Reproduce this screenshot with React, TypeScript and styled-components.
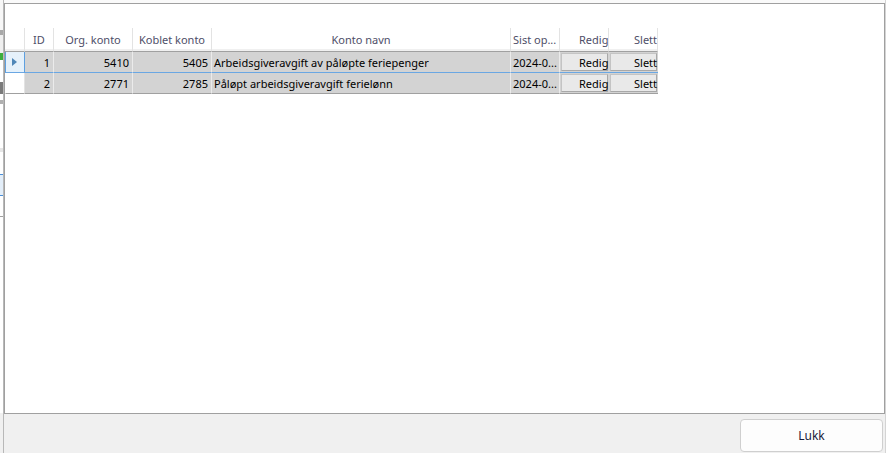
import React from "react";
import styled, { createGlobalStyle } from "styled-components";

const Global = createGlobalStyle`
  html, body { margin: 0; padding: 0; background: #f0f0f0; }
  body { font-family: "Noto Sans", "Open Sans", sans-serif; font-size: 11px; }
  * { box-sizing: border-box; }
`;

const Screen = styled.div`
  display: flex;
  width: 886px;
  height: 453px;
  overflow: hidden;
`;

const BackdropStrip = styled.div`
  width: 4px;
  display: flex;
  flex-direction: column;
  background: #fafafa;
  border-right: 1px solid #b8b8b8;
`;

const Stripe = styled.div<{ $h: number; $c: string }>`
  height: ${(p) => p.$h}px;
  flex-shrink: 0;
  background: ${(p) => p.$c};
`;

const Main = styled.div`
  width: 881px;
  display: flex;
  flex-direction: column;
  background: #f0f0f0;
`;

const TopGap = styled.div`
  height: 3px;
  background: #fafafa;
`;

const Panel = styled.div`
  height: 411px;
  background: #ffffff;
  border: 1px solid #a0a0a0;
  padding-top: 24px;
`;

const GridView = styled.div`
  width: 653px;
  overflow: hidden;
  display: grid;
  grid-template-columns: 20px 29px 79px 79px 299px 49px 49px 49px;
`;

const HeaderCell = styled.div<{ $align?: string; $pl?: number }>`
  height: 24px;
  line-height: 23px;
  padding: 0 2px 0 ${(p) => p.$pl ?? 2}px;
  background: linear-gradient(#ffffff 0, #ffffff 21px, #f0f0f0 21px);
  border-right: 1px solid #e3e3e3;
  border-bottom: 1px solid #a0a0a0;
  color: #4e4e68;
  text-align: ${(p) => p.$align ?? "center"};
  white-space: nowrap;
  overflow: hidden;
`;

const Cell = styled.div<{ $align?: string; $sep: string }>`
  height: 21px;
  line-height: 21px;
  padding: 0 3px 0 2px;
  background: #d3d3d3;
  color: #000;
  border-right: 1px solid #ebebeb;
  border-bottom: 1px solid ${(p) => p.$sep};
  text-align: ${(p) => p.$align ?? "left"};
  white-space: nowrap;
  overflow: hidden;
`;

const RowHeader = styled.div<{ $current?: boolean; $sep: string }>`
  height: 21px;
  display: flex;
  align-items: center;
  justify-content: center;
  background: ${(p) => (p.$current ? "#e5f1fb" : "#ffffff")};
  border-right: 1px solid ${(p) => (p.$current ? "#5ea0e0" : "#e3e3e3")};
  border-left: 1px solid ${(p) => (p.$current ? "#5ea0e0" : "transparent")};
  border-bottom: 1px solid ${(p) => p.$sep};
`;

const ButtonCell = styled.div<{ $sep: string }>`
  height: 21px;
  padding: 1px;
  background: #d3d3d3;
  border-bottom: 1px solid ${(p) => p.$sep};
  overflow: hidden;
`;

const GridButton = styled.div<{ $pl: number }>`
  height: 18px;
  line-height: 18px;
  padding-left: ${(p) => p.$pl}px;
  background: #e9e9e9;
  border: 1px solid #c4c4c4;
  border-right-color: #a8a8a8;
  border-bottom-color: #a8a8a8;
  color: #000;
  white-space: nowrap;
`;

const Footer = styled.div`
  flex: 1;
  display: flex;
  justify-content: flex-end;
  align-items: flex-start;
  padding: 5px 2px 0 0;
`;

const CloseButton = styled.button`
  width: 143px;
  height: 33px;
  background: #fdfdfd;
  border: 1px solid #cfcfcf;
  border-radius: 4px;
  font-family: "Noto Sans", "Open Sans", sans-serif;
  font-size: 12px;
  color: #1a1a3a;
  padding: 0;
`;

const RightStrip = styled.div`
  width: 1px;
  background: #d4d4d4;
`;

const Arrow = () => (
  <svg width="6" height="8" viewBox="0 0 6 8">
    <polygon points="0,0 5,4 0,8" fill="#4f87b8" />
  </svg>
);

const rows = [
  { id: 1, org: "5410", kob: "5405", name: "Arbeidsgiveravgift av påløpte feriepenger", date: "2024-0...", current: true },
  { id: 2, org: "2771", kob: "2785", name: "Påløpt arbeidsgiveravgift ferielønn", date: "2024-0...", current: false },
];

export default function App() {
  return (
    <>
      <Global />
      <Screen>
        <BackdropStrip>
          <Stripe $h={30} $c="#f7f7f7" />
          <Stripe $h={5} $c="#a8a8a8" />
          <Stripe $h={18} $c="#efefef" />
          <Stripe $h={7} $c="#3cae3c" />
          <Stripe $h={22} $c="#ffffff" />
          <Stripe $h={12} $c="#7a7a7a" />
          <Stripe $h={6} $c="#ffffff" />
          <Stripe $h={4} $c="#b0b0b0" />
          <Stripe $h={44} $c="#ffffff" />
          <Stripe $h={4} $c="#e6e6e6" />
          <Stripe $h={22} $c="#ffffff" />
          <Stripe $h={1} $c="#4a90d9" />
          <Stripe $h={20} $c="#e3eef9" />
          <Stripe $h={1} $c="#4a90d9" />
          <Stripe $h={20} $c="#ffffff" />
          <Stripe $h={1} $c="#a0a0a0" />
          <Stripe $h={196} $c="#ffffff" />
          <Stripe $h={40} $c="#f0f0f0" />
        </BackdropStrip>
        <Main>
          <TopGap />
          <Panel>
            <GridView>
              <HeaderCell />
              <HeaderCell>ID</HeaderCell>
              <HeaderCell>Org. konto</HeaderCell>
              <HeaderCell>Koblet konto</HeaderCell>
              <HeaderCell>Konto navn</HeaderCell>
              <HeaderCell $align="left">Sist op...</HeaderCell>
              <HeaderCell $align="left" $pl={19}>Redig</HeaderCell>
              <HeaderCell $align="left" $pl={25}>Slett</HeaderCell>
              {rows.map((r) => {
                const sep = r.current ? "#6aa7e3" : "#a0a0a0";
                return (
                  <React.Fragment key={r.id}>
                    <RowHeader $current={r.current} $sep={sep}>{r.current && <Arrow />}</RowHeader>
                    <Cell $align="right" $sep={sep}>{r.id}</Cell>
                    <Cell $align="right" $sep={sep}>{r.org}</Cell>
                    <Cell $align="right" $sep={sep}>{r.kob}</Cell>
                    <Cell $sep={sep}>{r.name}</Cell>
                    <Cell $sep={sep}>{r.date}</Cell>
                    <ButtonCell $sep={sep}><GridButton $pl={17}>Redig</GridButton></ButtonCell>
                    <ButtonCell $sep={sep}><GridButton $pl={23}>Slett</GridButton></ButtonCell>
                  </React.Fragment>
                );
              })}
            </GridView>
          </Panel>
          <Footer>
            <CloseButton>Lukk</CloseButton>
          </Footer>
        </Main>
        <RightStrip />
      </Screen>
    </>
  );
}
